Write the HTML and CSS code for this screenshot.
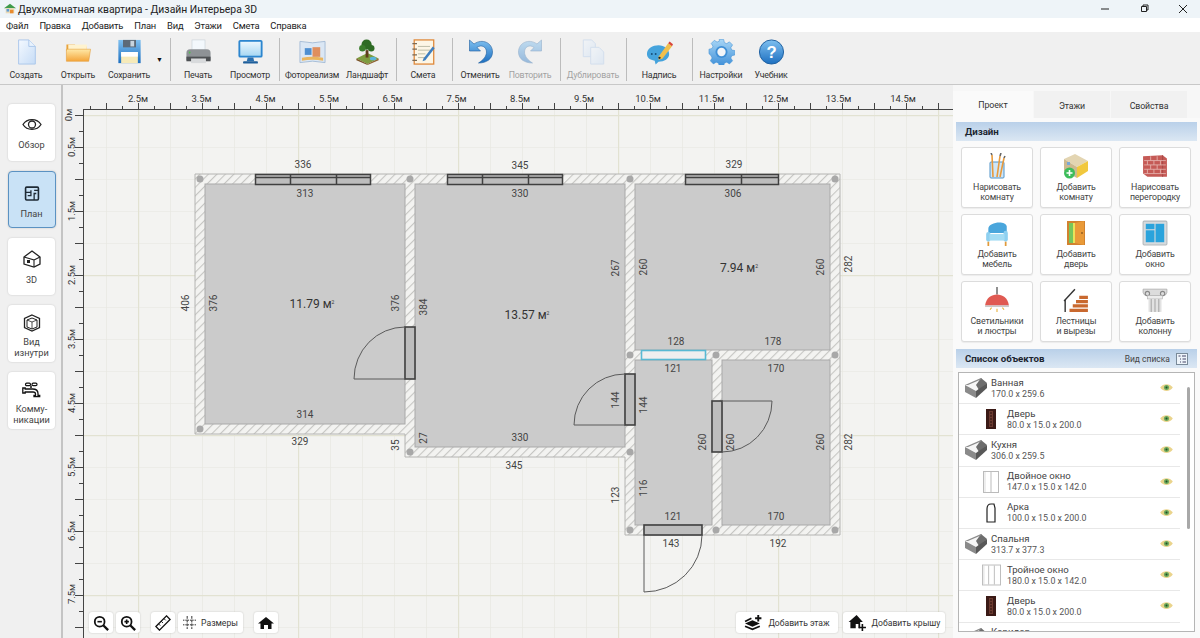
FILE: index.html
```html
<!DOCTYPE html>
<html lang="ru">
<head>
<meta charset="utf-8">
<title>Дизайн Интерьера 3D</title>
<link rel="stylesheet" href="styles.css">
</head>
<body>
<svg class="defs" width="0" height="0" aria-hidden="true">
  <defs>
    <linearGradient id="gPaper" x1="0" y1="0" x2="1" y2="1"><stop offset="0" stop-color="#f4f9ff"/><stop offset="1" stop-color="#c6dcf6"/></linearGradient>
    <linearGradient id="gFolder" x1="0" y1="0" x2="0" y2="1"><stop offset="0" stop-color="#ffe9a8"/><stop offset="1" stop-color="#f4a53a"/></linearGradient>
    <linearGradient id="gBlue" x1="0" y1="0" x2="0" y2="1"><stop offset="0" stop-color="#7fc0f0"/><stop offset="1" stop-color="#1d6fc0"/></linearGradient>
    <linearGradient id="gLight" x1="0" y1="0" x2="0" y2="1"><stop offset="0" stop-color="#a8d6f6"/><stop offset="1" stop-color="#3e8fd8"/></linearGradient>
    <linearGradient id="gScreen" x1="0" y1="0" x2="0" y2="1"><stop offset="0" stop-color="#eaf6fd"/><stop offset="1" stop-color="#a9d8f3"/></linearGradient>
    <pattern id="minor" x="106" y="115" width="32" height="32" patternUnits="userSpaceOnUse"><path d="M0 0V32M0 0H32" stroke="#e6e6e0" fill="none" stroke-width="1.2"/></pattern>
    <pattern id="major" x="138" y="115" width="160" height="160" patternUnits="userSpaceOnUse"><path d="M0 0V160M0 0H160" stroke="#e2e2d2" fill="none" stroke-width="2.4"/></pattern>
    <pattern id="hatch" width="6" height="6" patternUnits="userSpaceOnUse" patternTransform="rotate(45)"><rect width="6" height="6" fill="#f3f3f1"/><rect width="1.1" height="6" fill="#c6c6c3"/></pattern>
    <pattern id="ticksTop" x="90" y="100" width="32" height="10" patternUnits="userSpaceOnUse"><path d="M.5 6V10M16.5 3V10" stroke="#444" fill="none"/></pattern>
    <pattern id="ticksLeft" x="74" y="115" width="10" height="32" patternUnits="userSpaceOnUse"><path d="M1 .5H10M5 16.500H10" stroke="#444" fill="none"/></pattern>
    <symbol id="roomBox" viewBox="0 0 24 22"><path d="M1 8 17 1l6 5-10 8z" fill="#f6f6f6"/><path d="M17 1l6 5-8 7-3-5z" fill="#6d6d6d"/><path d="M1 8 17 1l1 1L4 8z" fill="#8b8b8b"/><path d="M1 8v7l11 6v-7z" fill="#8a8a8a"/><path d="M12 14v7l11-10V6z" fill="#585858"/></symbol>
    <symbol id="doorDark" viewBox="0 0 10 20"><rect width="10" height="20" fill="#3b1a16"/><rect x="3" y="2" width="4" height="16" fill="#6b3a30"/><path d="M5 3v14" stroke="#2a100d" stroke-dasharray="2 1"/></symbol>
    <symbol id="eyeIco" viewBox="0 0 14 10"><path d="M0 5C3 0 11 0 14 5 11 10 3 10 0 5z" fill="#ead48c"/><circle cx="7" cy="5" r="2.800" fill="#6aa95c"/><circle cx="7" cy="5" r="1.100" fill="#234a26"/></symbol>
  </defs>
</svg>

<header class="titlebar">
  <svg class="app-ico" viewBox="0 0 14 12"><path d="M0 5 7 0l7 5z" fill="#3f9b4a"/><rect x="2" y="5" width="10" height="6" fill="#e9d9b6"/><rect x="7" y="7" width="4" height="4" fill="#e88b2f"/><rect x="3" y="6" width="3" height="3" fill="#5c9bd6"/></svg>
  <span class="title-text">Двухкомнатная квартира - Дизайн Интерьера 3D</span>
  <div class="win-btns">
    <svg class="win-ico" viewBox="0 0 12 12"><path d="M2 6H10" stroke="#222"/></svg>
    <svg class="win-ico" viewBox="0 0 12 12"><path d="M3.500 3.500h5v5h-5zM5 3.500V2h5v5H8.500" stroke="#222" fill="none"/></svg>
    <svg class="win-ico" viewBox="0 0 12 12"><path d="M2 2 10 10M10 2 2 10" stroke="#222"/></svg>
  </div>
</header>

<nav class="menubar">
  <span>Файл</span><span>Правка</span><span>Добавить</span><span>План</span><span>Вид</span><span>Этажи</span><span>Смета</span><span>Справка</span>
</nav>

<div class="toolbar">
  <div class="tgroup g1">
    <div class="tool"><svg viewBox="0 0 26 28"><path d="M4.500 1h11l7 7v19h-18z" fill="url(#gPaper)" stroke="#a9c6ea"/><path d="M15.500 1v7h7" fill="#e8f2fd" stroke="#a9c6ea"/></svg><span>Создать</span></div>
    <div class="tool"><svg viewBox="0 0 28 28"><path d="M1 6h9l2 2h11v5H1z" fill="#e9a33c"/><path d="M3 6h20v6H3z" fill="#fff3cf"/><path d="M1 24 1 11h26l-2 13z" fill="url(#gFolder)" stroke="#e29a35" stroke-width=".6"/></svg><span>Открыть</span></div>
    <div class="tool"><svg viewBox="0 0 26 28"><path d="M1 1h24v25H1z" fill="url(#gBlue)"/><rect x="6" y="1" width="14" height="8" fill="#5c6a78"/><rect x="14" y="2" width="4" height="6" fill="#c7d4de"/><rect x="4" y="14" width="18" height="12" fill="#f6eab9"/><rect x="4" y="14" width="18" height="5" fill="#fff"/></svg><span>Сохранить</span></div>
    <div class="tool-arrow">▼</div>
  </div>
  <div class="tsep"></div>
  <div class="tgroup g2">
    <div class="tool"><svg viewBox="0 0 28 28"><rect x="7" y="1" width="14" height="11" fill="#f3f8fc" stroke="#c3ccd4" stroke-width=".6"/><path d="M1 15q0-4 4-4h18q4 0 4 4v8H1z" fill="#8e9296"/><rect x="1" y="19" width="26" height="5" fill="#4e5154"/><rect x="6" y="21" width="16" height="5" fill="#d8dadc"/><circle cx="4.500" cy="14.500" r="1" fill="#4fbf4f"/></svg><span>Печать</span></div>
    <div class="tool"><svg viewBox="0 0 28 28"><rect x="1" y="1" width="26" height="19" rx="2" fill="#2c86cf"/><rect x="3" y="3" width="22" height="15" fill="url(#gScreen)"/><path d="M11 20h6l1 4h-8z" fill="#2a6fae"/><rect x="6" y="24" width="16" height="2.500" rx="1" fill="#1f5f9b"/></svg><span>Просмотр</span></div>
  </div>
  <div class="tsep"></div>
  <div class="tgroup g3">
    <div class="tool"><svg viewBox="0 0 28 26"><path d="M1 2q13 3 26 0v22q-13-3-26 0z" fill="#dbe7f4" stroke="#a6bcd6"/><path d="M3 19q11-2 22 0v3q-11-2-22 0z" fill="#eab55e"/><rect x="6" y="9" width="7" height="7" fill="#4f8fd0"/><rect x="14" y="8" width="8" height="10" fill="#df8e5e"/></svg><span>Фотореализм</span></div>
    <div class="tool"><svg viewBox="0 0 26 28"><path d="M1 21 13 15l12 6-12 6z" fill="#7e9c3f"/><path d="M1 21l12 6v1L1 23z" fill="#7a5326"/><path d="M13 27l12-6v2l-12 5z" fill="#8d6230"/><ellipse cx="19" cy="21" rx="3.500" ry="2" fill="#5bb5dc"/><rect x="11" y="12" width="3" height="8" fill="#5f3d1c"/><circle cx="12" cy="6" r="5.500" fill="#2e6b24"/><circle cx="7.500" cy="10" r="3.500" fill="#3a7d2c"/><circle cx="17" cy="10" r="3.500" fill="#2e6b24"/></svg><span>Ландшафт</span></div>
  </div>
  <div class="tsep"></div>
  <div class="tgroup g4">
    <div class="tool"><svg viewBox="0 0 26 28"><rect x="3" y="1" width="21" height="26" fill="#fdf6e6" stroke="#e08a3c" stroke-width="1.400"/><path d="M7 8h13M7 12h13M7 16h8M7 20h8" stroke="#b9b9a4"/><path d="M1 5h5M1 11h5M1 17h5M1 23h5" stroke="#7a6a55" stroke-width="1.400"/><path d="M13 21 23 8l2 2-10 13-3 1z" fill="#3f7fbf"/></svg><span>Смета</span></div>
  </div>
  <div class="tsep"></div>
  <div class="tgroup g5">
    <div class="tool"><svg viewBox="0 0 26 26"><path d="M2 1v11h11L9.500 8.500C14 5 19 8 19 13c0 4-3 8-8 11 8 0 14-4 14-11C25 4 15-1 6.500 5z" fill="url(#gBlue)" stroke="#1b5d9e" stroke-width=".6"/></svg><span>Отменить</span></div>
    <div class="tool is-off"><svg viewBox="0 0 26 26"><path d="M24 1v11H13l3.500-3.500C12 5 7 8 7 13c0 4 3 8 8 11-8 0-14-4-14-11C1 4 11-1 19.500 5z" fill="url(#gBlue)" stroke="#1b5d9e" stroke-width=".6"/></svg><span>Повторить</span></div>
  </div>
  <div class="tsep"></div>
  <div class="tgroup g6">
    <div class="tool is-off"><svg viewBox="0 0 24 28"><path d="M1 1h9l4 4v14H1z" fill="url(#gPaper)" stroke="#a9c6ea"/><path d="M9 9h9l5 5v13H9z" fill="url(#gPaper)" stroke="#a9c6ea"/></svg><span>Дублировать</span></div>
  </div>
  <div class="tsep"></div>
  <div class="tgroup g7">
    <div class="tool"><svg viewBox="0 0 28 26"><path d="M1 15C1 9 7 6 13 6s11 4 11 9-5 8-11 8l-3 3-1-4C4 21 1 19 1 15z" fill="#45a3dc"/><circle cx="6" cy="15" r="1" fill="#174f7a"/><circle cx="10" cy="15" r="1" fill="#174f7a"/><path d="M13 18 23 4l4 3-10 13-4 1z" fill="#f1c04d"/><path d="M23 4l1.500-2 3.500 3L27 7z" fill="#d8453a"/><circle cx="14" cy="19" r="1.200" fill="#222"/></svg><span>Надпись</span></div>
  </div>
  <div class="tsep"></div>
  <div class="tgroup g8">
    <div class="tool"><svg viewBox="0 0 28 28"><path d="M11.500 1h5l.8 3.600 2.600 1.100 3.100-2 3.500 3.500-2 3.100 1.100 2.600 3.400.6v5l-3.400.8-1.100 2.600 2 3.100-3.500 3.500-3.100-2-2.600 1.100-.8 3.400h-5l-.8-3.400-2.600-1.100-3.100 2-3.500-3.500 2-3.100-1.100-2.600L0 17v-5l3.400-.8 1.100-2.600-2-3.100L6 2l3.100 2 2.600-1.100z" transform="translate(.5 -.5) scale(.96)" fill="url(#gLight)" stroke="#3f8fd6" stroke-width=".6"/><circle cx="14" cy="14" r="6.500" fill="#3f8fd6"/><circle cx="14" cy="14" r="4.500" fill="#f2f5f8"/></svg><span>Настройки</span></div>
    <div class="tool"><svg viewBox="0 0 28 28"><circle cx="14" cy="14" r="13" fill="url(#gBlue)" stroke="#1b5d9e"/><text x="14" y="20.500" class="help-q">?</text></svg><span>Учебник</span></div>
  </div>
</div>

<main class="main">
  <aside class="rail">
    <div class="rail-btn"><svg viewBox="0 0 20 14"><path d="M1 7C5 .5 15 .5 19 7 15 13.500 5 13.500 1 7z" fill="none" stroke="#222" stroke-width="1.300"/><circle cx="10" cy="7" r="3.500" fill="none" stroke="#222" stroke-width="1.300"/></svg><span>Обзор</span></div>
    <div class="rail-btn is-active"><svg viewBox="0 0 14 14"><rect x="1" y="1" width="12" height="12" rx="1" fill="none" stroke="#1e2a35" stroke-width="1.500"/><path d="M1 6H6M6 4V9H3M9 13V7H11M9 4h4" fill="none" stroke="#1e2a35" stroke-width="1.200"/></svg><span>План</span></div>
    <div class="rail-btn"><svg viewBox="0 0 18 18"><path d="M1 7 9 1l8 6v7l-6 3-10-3z" fill="none" stroke="#222" stroke-width="1.300"/><path d="M1 7l10 3v7M11 10l6-3" fill="none" stroke="#222" stroke-width="1.100"/><rect x="4" y="10" width="3" height="3" fill="#222"/></svg><span>3D</span></div>
    <div class="rail-btn two"><svg viewBox="0 0 18 18"><path d="M9 1l7.500 3.500v9L9 17l-7.500-3.500v-9z" fill="none" stroke="#222" stroke-width="1.300"/><path d="M4 6l5-2 5 2v7l-5 2-5-2z" fill="none" stroke="#222"/><path d="M4 6l5 2 5-2M9 8v7" fill="none" stroke="#222" stroke-width=".8"/></svg><span>Вид<br>изнутри</span></div>
    <div class="rail-btn two"><svg viewBox="0 0 20 15"><path d="M.8 5.500h2.400v1h7.300q5.500 0 5.500 4.500v2h1.700v1.200h-5.700V13h1.500v-1.500q0-2-2.500-2H3.200v1H.8z" fill="none" stroke="#111" stroke-width="1.300"/><path d="M9 5.500V3" stroke="#111" stroke-width="1.500"/><rect x="3.500" y=".7" width="5" height="2.400" rx="1.200" fill="none" stroke="#111" stroke-width="1.200"/><rect x="10" y=".7" width="5" height="2.400" rx="1.200" fill="none" stroke="#111" stroke-width="1.200"/></svg><span>Комму-<br>никации</span></div>
  </aside>

  <section class="canvas">
    <svg class="plan" viewBox="63 85 890 553">
      <rect x="84" y="110" width="869" height="528" fill="#f3f3f1"/>
      <rect x="84" y="110" width="869" height="528" fill="url(#minor)"/>
      <rect x="84" y="110" width="869" height="528" fill="url(#major)"/>
      <rect x="83" y="100" width="870" height="10" fill="url(#ticksTop)"/>
      <rect x="74" y="115" width="10" height="523" fill="url(#ticksLeft)"/>
      <path d="M83 109.500H953M83.500 109V638" stroke="#444" fill="none"/>

      <g class="ruler">
        <text x="138" y="102">2.5м</text><text x="201.500" y="102">3.5м</text><text x="265.500" y="102">4.5м</text><text x="329" y="102">5.5м</text><text x="392.500" y="102">6.5м</text><text x="456.500" y="102">7.5м</text><text x="520" y="102">8.5м</text><text x="584" y="102">9.5м</text><text x="648" y="102">10.5м</text><text x="711.500" y="102">11.5м</text><text x="775.500" y="102">12.5м</text><text x="838.500" y="102">13.5м</text><text x="903" y="102">14.5м</text>
        <text transform="translate(72 115) rotate(-90)">0м</text><text transform="translate(75 147) rotate(-90)">0.5м</text><text transform="translate(75 211) rotate(-90)">1.5м</text><text transform="translate(75 275) rotate(-90)">2.5м</text><text transform="translate(75 339) rotate(-90)">3.5м</text><text transform="translate(75 403) rotate(-90)">4.5м</text><text transform="translate(75 467) rotate(-90)">5.5м</text><text transform="translate(75 531) rotate(-90)">6.5м</text><text transform="translate(75 594) rotate(-90)">7.5м</text>
      </g>

      <path d="M195 174H840V535H625V457H405V434H195z" fill="url(#hatch)" stroke="#b4b4b2"/>
      <g fill="#cbcbcb" stroke="#a9a9a9">
        <rect x="205" y="184" width="200" height="240"/>
        <rect x="415" y="184" width="210" height="263"/>
        <rect x="635" y="184" width="195" height="166"/>
        <rect x="635" y="360" width="77" height="165"/>
        <rect x="722" y="360" width="108" height="165"/>
      </g>
      <g fill="#a8a8a8">
        <circle cx="200" cy="179" r="3.500"/><circle cx="410" cy="179" r="3.500"/><circle cx="630" cy="179" r="3.500"/><circle cx="835" cy="179" r="3.500"/><circle cx="200" cy="429" r="3.500"/><circle cx="410" cy="452" r="3.500"/><circle cx="630" cy="452" r="3.500"/><circle cx="630" cy="355" r="3.500"/><circle cx="716" cy="355" r="3.500"/><circle cx="835" cy="355" r="3.500"/><circle cx="630" cy="530" r="3.500"/><circle cx="716" cy="530" r="3.500"/><circle cx="835" cy="530" r="3.500"/>
      </g>

      <g fill="#bdbdbd" stroke="#404040" stroke-width="1.500">
        <rect x="255.500" y="174.500" width="115" height="10"/>
        <path d="M256 177.500H370M290.500 175V184M336.500 175V184" fill="none"/>
        <rect x="447.500" y="174.500" width="115" height="10"/>
        <path d="M448 177.500H562M482.500 175V184M528.500 175V184" fill="none"/>
        <rect x="685.500" y="174.500" width="93" height="10"/>
        <path d="M686 177.500H778M741.500 175V184" fill="none"/>
      </g>
      <rect x="641.500" y="350.500" width="64" height="9" fill="#efefef" stroke="#58b9d3" stroke-width="1.600"/>

      <g fill="#bdbdbd" stroke="#404040" stroke-width="1.600">
        <rect x="405" y="327" width="10" height="52"/>
        <rect x="625" y="374" width="10" height="51"/>
        <rect x="712" y="401" width="10" height="51"/>
        <rect x="644" y="525" width="58" height="10"/>
      </g>
      <g fill="none" stroke="#5a5a5a" stroke-width="1">
        <path d="M405 327A51 52 0 0 0 354 379H405"/>
        <path d="M625 374A51 51 0 0 0 574 425H625"/>
        <path d="M722 401H772A50 51 0 0 1 722 452"/>
        <path d="M702 535A58 57 0 0 1 644 592V535"/>
      </g>

      <g class="dim">
        <text x="303" y="168">336</text><text x="305" y="196.500">313</text><text x="520" y="168.500">345</text><text x="520" y="196.500">330</text><text x="734" y="168">329</text><text x="733" y="196.500">306</text>
        <text x="676" y="344.500">128</text><text x="773" y="344.500">178</text><text x="673" y="371.500">121</text><text x="776" y="371.500">170</text>
        <text x="305" y="417.500">314</text><text x="300" y="444.500">329</text><text x="520" y="440.500">330</text><text x="514" y="468.500">345</text>
        <text x="673" y="519.500">121</text><text x="776" y="519.500">170</text><text x="671" y="546.500">143</text><text x="778" y="546.500">192</text>
        <text transform="translate(188.500 303) rotate(-90)">406</text><text transform="translate(216.500 303) rotate(-90)">376</text><text transform="translate(398.500 303) rotate(-90)">376</text><text transform="translate(426.500 307) rotate(-90)">384</text><text transform="translate(618.500 268) rotate(-90)">267</text><text transform="translate(646.500 267) rotate(-90)">260</text><text transform="translate(823.500 267) rotate(-90)">260</text><text transform="translate(851.500 264) rotate(-90)">282</text>
        <text transform="translate(618.500 400) rotate(-90)">144</text><text transform="translate(646.500 405) rotate(-90)">144</text><text transform="translate(705.500 442) rotate(-90)">260</text><text transform="translate(733.500 442) rotate(-90)">260</text><text transform="translate(823.500 442) rotate(-90)">260</text><text transform="translate(851.500 442) rotate(-90)">282</text>
        <text transform="translate(398.500 445) rotate(-90)">35</text><text transform="translate(426.500 438) rotate(-90)">27</text><text transform="translate(618.500 495) rotate(-90)">123</text><text transform="translate(646.500 488) rotate(-90)">116</text>
      </g>
      <g class="area">
        <text x="312" y="307.500">11.79 м<tspan class="sup" dy="-4">2</tspan></text><text x="527" y="318.500">13.57 м<tspan class="sup" dy="-4">2</tspan></text><text x="739" y="271.500">7.94 м<tspan class="sup" dy="-4">2</tspan></text>
      </g>
    </svg>

    <div class="float-left">
      <div class="fbtn sq"><svg viewBox="0 0 18 18"><circle cx="7.500" cy="7.500" r="5.500" fill="none" stroke="#111" stroke-width="2"/><path d="M11.500 11.500 17 17" stroke="#111" stroke-width="2.600"/><path d="M5 7.500h5" stroke="#111" stroke-width="1.800"/></svg></div>
      <div class="fbtn sq"><svg viewBox="0 0 18 18"><circle cx="7.500" cy="7.500" r="5.500" fill="none" stroke="#111" stroke-width="2"/><path d="M11.500 11.500 17 17" stroke="#111" stroke-width="2.600"/><path d="M5 7.500h5M7.500 5v5" stroke="#111" stroke-width="1.800"/></svg></div>
      <div class="fbtn sq gap-l"><svg viewBox="0 0 18 18"><path d="M1 13 13 1l4 4L5 17z" fill="none" stroke="#111" stroke-width="1.500"/><path d="M4 10l2 2M7 7l2 2M10 4l2 2" stroke="#111"/></svg></div>
      <div class="fbtn dims"><svg viewBox="0 0 14 14"><path d="M0 4.500H14M0 9.500H14" stroke="#222" stroke-dasharray="1.500 1"/><path d="M4.500 0V14M9.500 0V14" stroke="#222" stroke-dasharray="3 1"/></svg><span>Размеры</span></div>
      <div class="fbtn sq gap-ll"><svg viewBox="0 0 16 14"><path d="M8 1 0 7.500h2.500V13H6V9h4v4h3.500V7.500H16z" fill="#111"/></svg></div>
    </div>
    <div class="float-right">
      <div class="fbtn wide"><svg viewBox="0 0 18 15"><path d="M1 8l7-3 7 3-7 3z" fill="#111"/><path d="M1 10.500l7 3 7-3" fill="none" stroke="#111" stroke-width="1.600"/><path d="M1 6l6-3" stroke="#111" stroke-width="1.600"/><path d="M13.500 0v6M10.500 3h6" stroke="#111" stroke-width="1.800"/></svg><span>Добавить этаж</span></div>
      <div class="fbtn wide"><svg viewBox="0 0 20 18"><path d="M9 0 0 8h2v7h6v-5h3v5h2V8h3z" fill="#111"/><path d="M15.500 10v8M11.500 14h8" stroke="#111" stroke-width="1.800"/></svg><span>Добавить крышу</span></div>
    </div>
  </section>

  <aside class="side">
    <div class="tabs">
      <div class="tab is-active">Проект</div>
      <div class="tab">Этажи</div>
      <div class="tab">Свойства</div>
    </div>
    <div class="side-body">
      <div class="sec-head"><b>Дизайн</b></div>
      <div class="cards">
        <div class="card"><svg viewBox="0 0 20 26"><rect x="3" y="9" width="14" height="16" rx="1" fill="#cfe6f7" stroke="#4f93c9"/><path d="M6 24 5 2M10 24 13 3M13 24 17 5" stroke="#e89a3c" stroke-width="1.600"/><path d="M5 2l-1-2M13 3l1-3M17 5l1-2" stroke="#666" stroke-width="1.600"/></svg><span>Нарисовать<br>комнату</span></div>
        <div class="card"><svg viewBox="0 0 26 26"><path d="M1 6l11-5 13 7-11 6z" fill="#e3d5b2"/><path d="M1 6v12l13 7V14z" fill="#cdb98f"/><path d="M14 14v11l11-7V8z" fill="#f1c83e"/><rect x="4" y="9" width="3" height="3" fill="#7aa8d6"/><circle cx="6.500" cy="20" r="5.500" fill="#3dbd5b"/><path d="M3.500 20h6M6.500 17v6" stroke="#fff" stroke-width="1.600"/></svg><span>Добавить<br>комнату</span></div>
        <div class="card"><svg viewBox="0 0 24 22"><path d="M1 2 19 1l4 3v17H5l-4-3z" fill="#c55a56"/><path d="M19 1v20" stroke="#a94b47"/><path d="M2 6h20M2 10h20M2 14h20M2 18h20M8 2v4M14 2v4M5 6v4M11 6v4M17 6v4M8 10v4M14 10v4M5 14v4M11 14v4M17 14v4" stroke="#e6b4ae" stroke-width=".8"/></svg><span>Нарисовать<br>перегородку</span></div>
        <div class="card"><svg viewBox="0 0 22 24"><path d="M3 8C3 2 19 0 20 6v6H3z" fill="#4aa6dc"/><rect x="1" y="11" width="4" height="9" rx="2" fill="#8ed0f0"/><rect x="17" y="10" width="4" height="10" rx="2" fill="#8ed0f0"/><rect x="4" y="13" width="14" height="6" fill="#a3dcf4"/><path d="M3 20v4M19 20v4" stroke="#e19a3a" stroke-width="1.600"/></svg><span>Добавить<br>мебель</span></div>
        <div class="card"><svg viewBox="0 0 20 26"><rect x="1" y="1" width="18" height="24" fill="#d2822f"/><rect x="3" y="3" width="8" height="20" fill="#e8e25a"/><rect x="3" y="3" width="4" height="20" fill="#76c65c"/><path d="M9 3 18 1v24l-9-2z" fill="#e99a38"/><circle cx="16" cy="13" r=".8" fill="#5a3510"/></svg><span>Добавить<br>дверь</span></div>
        <div class="card"><svg viewBox="0 0 24 24"><rect x="1" y="1" width="22" height="22" rx="1" fill="#d5dadd" stroke="#b3b9bd"/><rect x="3.500" y="3.500" width="8" height="5" fill="#2aa3dc"/><rect x="12.500" y="3.500" width="8" height="17" fill="#2aa3dc"/><rect x="3.500" y="9.500" width="8" height="11" fill="#2aa3dc"/></svg><span>Добавить<br>окно</span></div>
        <div class="card"><svg viewBox="0 0 24 24"><path d="M12 0v7" stroke="#777" stroke-width="1.500"/><path d="M1 17C2 10 7 7 12 7s10 3 11 10z" fill="#e05a52"/><rect x="1" y="17" width="22" height="1.500" fill="#c9c9c9"/><path d="M12 20v3M7 19l-1.500 2M17 19l1.500 2" stroke="#e9b23c"/></svg><span>Светильники<br>и люстры</span></div>
        <div class="card"><svg viewBox="0 0 24 24"><path d="M1 13 11 2" stroke="#333" stroke-width="1.300"/><path d="M2 12v11" stroke="#333" stroke-width="1.300"/><path d="M6 23h17v-3H6zM9 19h14v-3H9zM12 15h11v-3H12zM15 11h8V8h-8z" fill="#c9692f"/></svg><span>Лестницы<br>и вырезы</span></div>
        <div class="card"><svg viewBox="0 0 24 24"><path d="M1 2h22v3q-1 3-3 3H4Q2 8 1 5z" fill="#dcdcdc" stroke="#a8a8a8" stroke-width=".7"/><circle cx="5" cy="6" r="2" fill="none" stroke="#888"/><circle cx="19" cy="6" r="2" fill="none" stroke="#888"/><rect x="5" y="8" width="14" height="3" fill="#ececec" stroke="#b2b2b2" stroke-width=".6"/><rect x="6" y="11" width="12" height="12" fill="#e2e2e2"/><path d="M8.500 11v12M12 11v12M15.500 11v12" stroke="#a8a8a8"/></svg><span>Добавить<br>колонну</span></div>
      </div>
      <div class="sec-head list-head"><b>Список объектов</b><span class="view-mode">Вид списка<svg viewBox="0 0 12 12"><rect x=".5" y=".5" width="11" height="11" fill="#eef4fa" stroke="#7a8a99"/><path d="M2.500 3h2M6 3h4M4 6h1M6.500 6h3.500M4 9h1M6.500 9h3.500" stroke="#446"/></svg></span></div>
      <div class="list">
        <div class="rows">
          <div class="row"><svg class="ico-room"><use href="#roomBox"/></svg><div class="row-text"><span>Ванная</span><small>170.0 x 259.6</small></div><svg class="eye"><use href="#eyeIco"/></svg></div>
          <div class="row sub"><svg class="ico-door"><use href="#doorDark"/></svg><div class="row-text"><span>Дверь</span><small>80.0 x 15.0 x 200.0</small></div><svg class="eye"><use href="#eyeIco"/></svg></div>
          <div class="row"><svg class="ico-room"><use href="#roomBox"/></svg><div class="row-text"><span>Кухня</span><small>306.0 x 259.5</small></div><svg class="eye"><use href="#eyeIco"/></svg></div>
          <div class="row sub"><svg class="ico-win" viewBox="0 0 16 22"><rect x=".5" y=".5" width="15" height="21" fill="#fff" stroke="#bbb"/><path d="M8 1v20" stroke="#bbb"/><path d="M2 1v20" stroke="#ddd"/></svg><div class="row-text"><span>Двойное окно</span><small>147.0 x 15.0 x 142.0</small></div><svg class="eye"><use href="#eyeIco"/></svg></div>
          <div class="row sub"><svg class="ico-door" viewBox="0 0 10 20"><path d="M1 19V6Q1 1 5 1h3l1 4v14z" fill="#fff" stroke="#222" stroke-width="1.200"/></svg><div class="row-text"><span>Арка</span><small>100.0 x 15.0 x 200.0</small></div><svg class="eye"><use href="#eyeIco"/></svg></div>
          <div class="row"><svg class="ico-room"><use href="#roomBox"/></svg><div class="row-text"><span>Спальня</span><small>313.7 x 377.3</small></div><svg class="eye"><use href="#eyeIco"/></svg></div>
          <div class="row sub"><svg class="ico-win wide" viewBox="0 0 20 22"><rect x=".5" y=".5" width="19" height="21" fill="#fff" stroke="#bbb"/><path d="M7 1v20M13 1v20" stroke="#bbb"/><path d="M2 1v20" stroke="#ddd"/></svg><div class="row-text"><span>Тройное окно</span><small>180.0 x 15.0 x 142.0</small></div><svg class="eye"><use href="#eyeIco"/></svg></div>
          <div class="row sub"><svg class="ico-door"><use href="#doorDark"/></svg><div class="row-text"><span>Дверь</span><small>80.0 x 15.0 x 200.0</small></div><svg class="eye"><use href="#eyeIco"/></svg></div>
          <div class="row"><svg class="ico-room"><use href="#roomBox"/></svg><div class="row-text"><span>Коридор</span><small>121.0 x 259.5</small></div><svg class="eye"><use href="#eyeIco"/></svg></div>
        </div>
        <div class="scroll"></div>
      </div>
    </div>
  </aside>
</main>
</body>
</html>
```
FILE: styles.css
```css
* { box-sizing: border-box; }
html, body { margin: 0; padding: 0; }
body {
  width: 1200px; height: 638px; overflow: hidden;
  font-family: Roboto, "Open Sans", "Liberation Sans", sans-serif;
  color: #333; background: #f0f0f0;
  display: flex; flex-direction: column;
}
.defs { position: absolute; }

.titlebar { height: 18px; flex: none; background: #eef4f8; display: flex; align-items: center; padding-left: 4px; }
.app-ico { width: 12px; height: 12px; margin-right: 2px; }
.title-text { font-size: 10.4px; color: #222; }
.win-btns { margin-left: auto; display: flex; gap: 27px; padding-right: 11px; }
.win-ico { width: 12px; height: 12px; display: block; }

.menubar { height: 14px; flex: none; background: #fff; display: flex; gap: 11px; padding-left: 6px; font-size: 9.4px; letter-spacing: -.2px; line-height: 15px; color: #222; }

.toolbar { height: 53px; flex: none; background: #f0f0f0; border-bottom: 1px solid #c8c8c8; display: flex; padding-top: 6px; }
.tgroup { display: flex; height: 43px; }
.tsep { width: 1px; height: 43px; margin: 0 .5px; background: #bcbcbc; flex: none; }
.g1 { width: 169px; }
.g2 { width: 107px; }
.g3 { width: 115px; }
.g4 { width: 54px; }
.g5 { width: 106px; }
.g6 { width: 64px; }
.g7 { width: 64px; }
.g8 { width: 108px; }
.tool { display: flex; flex-direction: column; align-items: center; font-size: 8.8px; letter-spacing: -.2px; line-height: 12px; color: #333; white-space: nowrap; padding-top: 1px; }
.tool svg { width: 27px; height: 27px; display: block; margin-bottom: 4px; }
.g1 .tool:nth-child(1), .g1 .tool:nth-child(2) { width: 52px; }
.g1 .tool:nth-child(3) { width: 50px; }
.g2 .tool:nth-child(1) { width: 54px; }
.g2 .tool:nth-child(2) { width: 50px; }
.g3 .tool:nth-child(1) { width: 64px; }
.g3 .tool:nth-child(2) { width: 46px; }
.g4 .tool { width: 52px; }
.g5 .tool:nth-child(1) { width: 54px; }
.g5 .tool:nth-child(2) { width: 46px; }
.g6 .tool, .g7 .tool { width: 64px; }
.g8 .tool:nth-child(1) { width: 56px; }
.g8 .tool:nth-child(2) { width: 44px; }
.is-off { opacity: .42; }
.tool-arrow { width: 14px; padding: 17px 0 0 2px; font-size: 7px; line-height: 10px; color: #111; }
.help-q { font: bold 18px "Liberation Sans", sans-serif; fill: #fff; text-anchor: middle; }

.main { flex: 1; display: flex; min-height: 0; }
.rail { width: 63px; flex: none; border-right: 2px solid #c4c4c4; padding: 19px 0 0 8px; display: flex; flex-direction: column; gap: 10px; background: #f0f0f0; }
.rail-btn { width: 47px; height: 57px; background: #fff; border-radius: 4px; box-shadow: 0 0 2px rgba(0,0,0,.18); display: flex; flex-direction: column; align-items: center; padding-top: 13px; font-size: 9.2px; line-height: 10.5px; text-align: center; color: #444; }
.rail-btn svg { width: 20px; height: 15px; display: block; margin-bottom: 8px; }
.rail-btn.two { padding-top: 9px; }
.rail-btn.two svg { height: 18px; margin-bottom: 5px; }
.rail-btn.is-active { background: #c9e2f6; border: 1px solid #5b92c2; padding-top: 14px; width: 48px; margin-left: -.5px; }
.rail-btn:nth-child(3) { padding-top: 12px; }
.rail-btn:nth-child(3) svg { height: 18px; margin-bottom: 7px; }

.canvas { flex: none; width: 890px; position: relative; background: #f0f0f0; }
.plan { display: block; width: 890px; height: 553px; }
.ruler text { font-size: 9.5px; fill: #333; text-anchor: middle; }
.dim text { font-size: 10px; fill: #444; text-anchor: middle; }
.area text { font-size: 12px; fill: #333; text-anchor: middle; }
.area .sup { font-size: 5px; }

.float-left, .float-right { position: absolute; bottom: 5px; display: flex; height: 21px; }
.float-left { left: 26px; gap: 3px; }
.float-right { right: 8px; gap: 5px; }
.fbtn { background: #fff; border-radius: 3px; box-shadow: 0 0 2px rgba(0,0,0,.2); display: flex; align-items: center; justify-content: center; font-size: 8.6px; color: #333; }
.fbtn.sq { width: 24px; }
.fbtn.sq svg { width: 16px; height: 16px; }
.gap-l { margin-left: 8px; }
.gap-ll { margin-left: 8px; }
.fbtn.dims { width: 65px; gap: 5px; }
.fbtn.dims svg { width: 13px; height: 13px; }
.fbtn.wide { width: 102px; gap: 5px; }
.fbtn.wide svg { width: 19px; height: 16px; }

.side { flex: 1; display: flex; flex-direction: column; padding-top: 6px; background: #f7f7f7; }
.tabs { display: flex; height: 27px; flex: none; gap: 1px; font-size: 8.8px; letter-spacing: -.1px; color: #333; }
.tab { width: 76px; background: #f1f1f1; display: flex; align-items: center; justify-content: center; padding-top: 2px; }
.tab.is-active { width: 80px; background: #fafafa; padding-top: 0; }
.side-body { flex: 1; background: #fafafa; padding: 4px 3px 0; display: flex; flex-direction: column; min-height: 0; }
.sec-head { height: 19px; flex: none; background: linear-gradient(#b9d0e9, #dbe7f3); display: flex; align-items: center; padding-left: 9px; font-size: 9.7px; color: #1c2530; }
.cards { display: grid; grid-template-columns: repeat(3, 72px); grid-auto-rows: 60.5px; gap: 6.5px 7px; padding: 6px 0 0 5px; flex: none; height: 208px; }
.card { background: #fff; border: 1px solid #dcdcdc; border-radius: 3px; display: flex; flex-direction: column; align-items: center; padding-top: 5px; font-size: 8.8px; letter-spacing: -.15px; line-height: 10.3px; text-align: center; color: #444; box-shadow: 0 1px 1px rgba(0,0,0,.06); }
.card svg { width: 26px; height: 26px; display: block; margin-bottom: 3px; }
.list-head { justify-content: space-between; padding-right: 9px; }
.view-mode { font-size: 8.5px; color: #444; display: flex; align-items: center; gap: 6px; }
.view-mode svg { width: 12px; height: 12px; }
.list { margin: 4px 2px 6px 2px; height: 260px; background: #fff; border: 1px solid #b5b5b5; display: flex; overflow: hidden; flex: none; }
.rows { width: 221px; flex: none; }
.row { height: 31.2px; border-bottom: 1px solid #e8e8e8; display: flex; align-items: center; padding-left: 5px; position: relative; }
.row-text { display: flex; flex-direction: column; font-size: 9.6px; line-height: 12px; color: #444; }
.row-text small { font-size: 8.9px; line-height: 11px; color: #555; }
.ico-room { width: 24px; height: 22px; margin-right: 3px; flex: none; }
.sub { padding-left: 0; }
.ico-door { width: 10px; height: 20px; flex: none; margin: 0 11px 0 27px; }
.ico-win { width: 16px; height: 22px; flex: none; margin: 0 8px 0 24px; }
.ico-win.wide { width: 19px; margin: 0 6px 0 23px; }
.eye { width: 13px; height: 9px; position: absolute; right: 7px; top: 10px; }
.scroll { width: 3px; height: 142px; margin: 14px 0 0 7px; background: #a8a8a8; border-radius: 2px; flex: none; }
```
